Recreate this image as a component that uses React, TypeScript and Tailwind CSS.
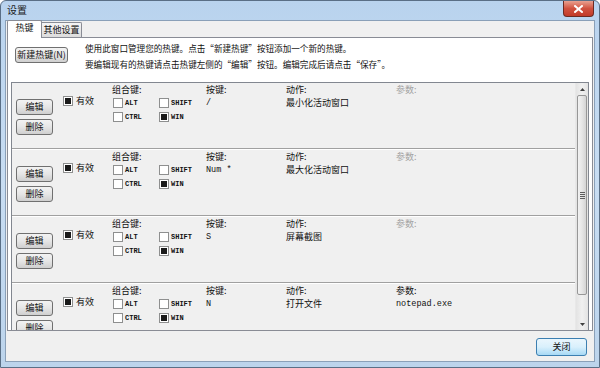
import React from "react";

const cjk = "font-['SimSun','Noto_Sans_CJK_SC',sans-serif]";
const mono = "font-['Liberation_Mono','Noto_Sans_CJK_SC',monospace]";

type Hotkey = { key: string; action: string; param: string };

const HOTKEYS: Hotkey[] = [
  { key: "/", action: "最小化活动窗口", param: "" },
  { key: "Num *", action: "最大化活动窗口", param: "" },
  { key: "S", action: "屏幕截图", param: "" },
  { key: "N", action: "打开文件", param: "notepad.exe" },
];

const Box: React.FC<{ checked?: boolean }> = ({ checked }) => (
  <span className="w-[10px] h-[10px] shrink-0 bg-white border border-[#8e8f8f] flex items-center justify-center">
    {checked && <span className="w-[6px] h-[6px] bg-[#1a1a1a]"></span>}
  </span>
);

const WinButton: React.FC<{ label: string; className?: string }> = ({ label, className = "" }) => (
  <div
    className={`flex items-center justify-center rounded-[3px] border border-[#707070] bg-gradient-to-b from-[#f3f3f3] via-[#e6e6e6] to-[#cfcfcf] text-[9px] text-[#111] ${cjk} ${className}`}
  >
    {label}
  </div>
);

const Row: React.FC<{ hk: Hotkey }> = ({ hk }) => (
  <div className="h-[66px] shrink-0 flex bg-[#f0f0f0] border-b border-[#a0a0a0] text-[9px] text-[#111]">
    {/* edit / delete */}
    <div className="w-[51px] pl-[4px] pt-[16px] flex flex-col gap-[4px]">
      <WinButton label="编辑" className="w-[37px] h-[16px]" />
      <WinButton label="删除" className="w-[37px] h-[16px]" />
    </div>
    {/* enabled */}
    <div className="w-[49px] pt-[13px]">
      <div className={`flex items-center gap-[3px] ${cjk}`}>
        <Box checked />
        <span className="leading-[10px]">有效</span>
      </div>
    </div>
    {/* modifiers */}
    <div className="w-[94px] pt-[1px]">
      <div className={`h-[12px] leading-[12px] ${cjk}`}>组合键:</div>
      <div className={`grid grid-cols-[46px_46px] gap-y-[3px] mt-[2px] pl-[1px] text-[7px] font-bold ${mono}`}>
        <div className="flex items-center gap-[2px]"><Box /><span>ALT</span></div>
        <div className="flex items-center gap-[2px]"><Box /><span>SHIFT</span></div>
        <div className="flex items-center gap-[2px]"><Box /><span>CTRL</span></div>
        <div className="flex items-center gap-[2px]"><Box checked /><span>WIN</span></div>
      </div>
    </div>
    {/* key */}
    <div className="w-[80px] pt-[1px]">
      <div className={`h-[12px] leading-[12px] ${cjk}`}>按键:</div>
      <div className={`mt-[1px] h-[12px] leading-[12px] text-[8.5px] ${mono}`}>{hk.key}</div>
    </div>
    {/* action */}
    <div className="w-[110px] pt-[1px]">
      <div className={`h-[12px] leading-[12px] ${cjk}`}>动作:</div>
      <div className={`mt-[1px] h-[12px] leading-[12px] ${cjk}`}>{hk.action}</div>
    </div>
    {/* param */}
    <div className="flex-1 pt-[1px]">
      <div className={`h-[12px] leading-[12px] ${cjk} ${hk.param ? "text-[#111]" : "text-[#a3a3a3]"}`}>参数:</div>
      <div className={`mt-[1px] h-[12px] leading-[12px] text-[8.5px] ${mono}`}>{hk.param}</div>
    </div>
  </div>
);

const ScrollBar: React.FC = () => (
  <div className="w-[13px] shrink-0 bg-gradient-to-r from-[#e3e3e3] via-[#f0f0f0] to-[#e3e3e3] border-l border-[#e8e8e8] flex flex-col">
    <div className="h-[12px] flex items-center justify-center">
      <svg width="5" height="3" viewBox="0 0 5 3"><path d="M0 3 L2.5 0 L5 3 Z" fill="#404040" /></svg>
    </div>
    <div className="mx-[1px] h-[200px] rounded-[2px] border border-[#979797] bg-gradient-to-r from-[#f2f2f2] via-[#e6e6e6] to-[#d4d4d4] flex items-center justify-center">
      <div className="flex flex-col gap-[1px]">
        <span className="w-[5px] h-[1px] bg-[#5d5d5d]"></span>
        <span className="w-[5px] h-[1px] bg-[#5d5d5d]"></span>
        <span className="w-[5px] h-[1px] bg-[#5d5d5d]"></span>
        <span className="w-[5px] h-[1px] bg-[#5d5d5d]"></span>
      </div>
    </div>
    <div className="flex-1"></div>
    <div className="h-[12px] flex items-center justify-center">
      <svg width="5" height="3" viewBox="0 0 5 3"><path d="M0 0 L2.5 3 L5 0 Z" fill="#404040" /></svg>
    </div>
  </div>
);

export default function App() {
  return (
    <div className="w-[600px] h-[368px] flex flex-col bg-gradient-to-b from-[#b9d3ee] via-[#c8ddf2] to-[#bcd4ec] border border-[#5a6f86] rounded-t-[6px] overflow-hidden">
      {/* title bar */}
      <div className="h-[19px] shrink-0 flex items-start justify-between">
        <span className={`ml-[6px] mt-[3px] text-[10px] leading-[12px] text-[#1b1b1b] ${cjk}`}>设置</span>
        <div className="mr-[5px] w-[31px] h-[16px] rounded-b-[4px] border border-t-0 border-[#6b2a22] bg-gradient-to-b from-[#e8a090] via-[#d0513f] to-[#c23a28] flex items-center justify-center">
          <svg width="9" height="8" viewBox="0 0 9 8">
            <path d="M1 1 L8 7 M8 1 L1 7" stroke="#ffffff" strokeWidth="2" strokeLinecap="square" />
          </svg>
        </div>
      </div>

      {/* client */}
      <div className="flex-1 mx-[4px] mb-[5px] bg-[#f0f0f0] border border-[#8aa0b8] flex flex-col">
        {/* tabs */}
        <div className="h-[17px] shrink-0 flex items-end pl-[1px] relative z-10">
          <div className={`h-[18px] w-[35px] text-center bg-white border border-b-0 border-[#898c95] rounded-t-[2px] text-[9px] leading-[14px] text-[#111] ${cjk}`}>
            热键
          </div>
          <div className={`h-[15px] w-[40px] text-center mb-[1px] bg-gradient-to-b from-[#f5f5f5] to-[#dcdcdc] border border-l-0 border-b-0 border-[#898c95] rounded-tr-[2px] text-[9px] leading-[14px] text-[#111] ${cjk}`}>
            其他设置
          </div>
        </div>

        {/* panel */}
        <div className="h-[294px] ml-[1px] mr-[1px] -mt-[1px] bg-white border border-[#898c95] flex flex-col">
          <div className="h-[44px] shrink-0 flex items-start">
            <WinButton label="新建热键(N)" className="ml-[7px] mt-[9px] w-[53px] h-[16px]" />
            <div className={`ml-[17px] mt-[2px] text-[8.6px] leading-[16px] text-[#111] ${cjk}`}>
              <p>使用此窗口管理您的热键。点击“新建热键”按钮添加一个新的热键。</p>
              <p>要编辑现有的热键请点击热键左侧的“编辑”按钮。编辑完成后请点击“保存”。</p>
            </div>
          </div>

          <div className="mx-[3px] flex-1 border border-[#828790] border-b-0 flex overflow-hidden">
            <div className="flex-1 flex flex-col overflow-hidden">
              {HOTKEYS.map((hk, i) => (
                <div key={i} className="border-b border-white">
                  <Row hk={hk} />
                </div>
              ))}
            </div>
            <ScrollBar />
          </div>
        </div>

        {/* footer */}
        <div className="flex-1 flex items-start justify-end pr-[7px] pt-[7px]">
          <div
            className={`w-[51px] h-[18px] rounded-[3px] border border-[#3c7fb1] bg-gradient-to-b from-[#eaf6fd] via-[#d9f0fc] to-[#a7d9f5] flex items-center justify-center text-[9px] text-[#111] ${cjk}`}
          >
            关闭
          </div>
        </div>
      </div>
    </div>
  );
}
